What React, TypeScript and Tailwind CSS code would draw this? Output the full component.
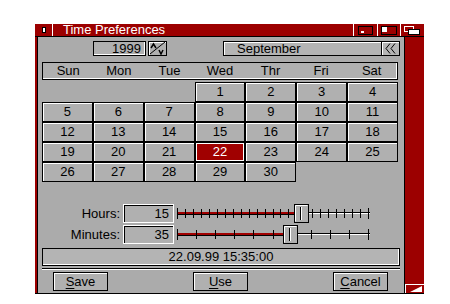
import React from 'react';

const days = ['Sun', 'Mon', 'Tue', 'Wed', 'Thr', 'Fri', 'Sat'];
const cells: (number | null)[] = [null, null, null, ...Array.from({ length: 30 }, (_, i) => i + 1)];

const Slider: React.FC<{ value: number; max: number; steps: number }> = ({ value, max, steps }) => {
  const w = 193;
  const kx = Math.round((value / max) * (w - 14));
  const ticks = Array.from({ length: steps + 1 }, (_, i) => Math.round((i * (w - 2)) / steps) + 1);
  return (
    <svg width={w} height={19} className="block">
      <rect x={0} y={8} width={kx} height={2} fill="#a00000" />
      <rect x={0} y={10} width={kx} height={1} fill="#000" />
      <rect x={kx + 14} y={8} width={w - kx - 14} height={1} fill="#000" />
      <rect x={kx + 14} y={9} width={w - kx - 14} height={1} fill="#fff" />
      {ticks.map((t, i) => (
        <rect key={i} x={t - 1} y={i === 0 || i === steps ? 4 : 5} width={1} height={i === 0 || i === steps ? 11 : 9} fill="#000" />
      ))}
      <rect x={kx + 0.5} y={0.5} width={14} height={18} fill="#b0b0b0" stroke="#000" />
      <path d={`M${kx + 1.5} 17.5V1.5H${kx + 13.5}`} stroke="#fff" fill="none" />
      <rect x={kx + 6} y={3} width={1} height={13} fill="#000" />
      <rect x={kx + 7} y={3} width={1} height={13} fill="#fff" />
    </svg>
  );
};

const Btn: React.FC<{ first: string; rest: string; className?: string }> = ({ first, rest, className }) => (
  <button className={`h-[19px] border border-black bg-[#b0b0b0] shadow-[inset_1px_1px_0_#fff] text-[13px] leading-none text-black ${className ?? ''}`}>
    <span className="underline underline-offset-2">{first}</span>
    {rest}
  </button>
);

export default function App() {
  return (
    <div className="w-[450px] h-[304px] bg-white pl-[35px] pt-[24px] font-['Liberation_Sans',Arial,sans-serif]">
      <div className="w-[389px] h-[270px] flex flex-col border-b border-black">
        {/* title bar */}
        <div className="h-[13px] bg-[#9c0000] flex items-stretch border-b border-black">
          <div className="w-[18px] border-r border-white flex items-center justify-center">
            <div className="w-[4px] h-[6px] bg-white border border-black" />
          </div>
          <div className="flex-1 pl-[10px] text-white text-[13px] leading-[12px]">Time Preferences</div>
          <div className="w-[24px] border-l border-white flex items-center justify-center">
            <div className="w-[15px] h-[9px] border border-black relative">
              <div className="absolute left-[2px] bottom-[1px] w-[3px] h-[2px] bg-white" />
            </div>
          </div>
          <div className="w-[23px] border-l border-white flex items-center justify-center">
            <div className="w-[16px] h-[9px] border border-black relative">
              <div className="absolute left-0 top-0 w-[5px] h-[5px] bg-white" />
            </div>
          </div>
          <div className="w-[24px] border-l border-white relative">
            <div className="absolute left-[3px] top-[2px] w-[10px] h-[6px] border border-white" />
            <div className="absolute left-[7px] top-[5px] w-[12px] h-[6px] bg-white border border-black" />
          </div>
        </div>

        <div className="flex-1 flex">
          <div className="w-[3px] bg-[#9c0000] border-r border-black" />
          {/* content */}
          <div className="w-[366px] bg-[#ababab] pt-[4px] pl-[4px] text-black text-[13px]">
            <div className="flex h-[15px]">
              <div className="ml-[51px] w-[53px] border border-black shadow-[inset_-1px_-1px_0_#fff] bg-[#b0b0b0] text-right pr-[4px] leading-[13px]">1999</div>
              <div className="ml-[2px] w-[19px] border border-black shadow-[inset_1px_1px_0_#fff] bg-[#b0b0b0]">
                <svg width={17} height={13} className="block">
                  <path d="M1 12L16 0" stroke="#000" />
                  <path d="M2 6L4.5 2L7 6" stroke="#000" fill="none" strokeWidth={1.5} />
                  <path d="M10 8L12 12L14 8" stroke="#000" fill="none" strokeWidth={1.5} />
                </svg>
              </div>
              <div className="ml-[56px] w-[159px] border border-black shadow-[inset_1px_1px_0_#fff] bg-[#b4b4b4] pl-[13px] leading-[13px]">September</div>
              <div className="w-[18px] border border-black border-l-0 shadow-[inset_1px_1px_0_#fff] bg-[#b4b4b4] flex items-center justify-center">
                <svg width={12} height={11} className="block">
                  <path d="M5 0.5L1 5.5L5 10.5M10 0.5L6 5.5L10 10.5" stroke="#000" fill="none" />
                </svg>
              </div>
            </div>

            <div className="mt-[6px] w-[356px] h-[18px] border border-black shadow-[inset_-1px_-1px_0_#fff] bg-[#b0b0b0] grid grid-cols-7">
              {days.map(d => (
                <div key={d} className="text-center leading-[16px]">{d}</div>
              ))}
            </div>

            <div className="mt-[2px] w-[356px] grid grid-cols-7 auto-rows-[20px]">
              {Array.from({ length: 35 }, (_, i) => cells[i] ?? null).map((n, i) =>
                n === null ? (
                  <div key={i} />
                ) : n === 22 ? (
                  <div key={i} className="border border-black bg-[#a00000] shadow-[inset_1px_1px_0_#fff,inset_-1px_-1px_0_#fff] text-white text-center leading-[18px]">{n}</div>
                ) : (
                  <div key={i} className="border border-black bg-[#b0b0b0] shadow-[inset_1px_1px_0_#fff] text-center leading-[18px]">{n}</div>
                )
              )}
            </div>

            <div className="mt-[22px] flex flex-col gap-[2px]">
              {[
                { label: 'Hours:', value: 15, max: 23, steps: 24 },
                { label: 'Minutes:', value: 35, max: 59, steps: 10 },
              ].map(r => (
                <div key={r.label} className="flex items-center h-[19px]">
                  <div className="w-[78px] text-right">{r.label}</div>
                  <div className="ml-[3px] w-[51px] h-[19px] border border-white shadow-[inset_1px_1px_0_#000] bg-[#b0b0b0] text-right pr-[4px] leading-[17px]">{r.value}</div>
                  <div className="ml-[3px]">
                    <Slider value={r.value} max={r.max} steps={r.steps} />
                  </div>
                </div>
              ))}
            </div>

            <div className="mt-[4px] w-[358px] h-[18px] border border-black shadow-[inset_-1px_-1px_0_#fff] bg-[#b4b4b4] text-center leading-[16px]">
              22.09.99 15:35:00
            </div>
            <div className="mt-[2px] w-[358px] border-t border-black border-b border-b-white" />

            <div className="mt-[2px] flex">
              <Btn first="S" rest="ave" className="ml-[11px] w-[55px]" />
              <Btn first="U" rest="se" className="ml-[85px] w-[55px]" />
              <Btn first="C" rest="ancel" className="ml-[85px] w-[55px]" />
            </div>
          </div>
          <div className="flex-1 bg-[#9c0000] border-l border-black flex flex-col justify-end">
            <div className="h-[9px] border-t border-l border-white relative">
              <svg width={18} height={8} className="absolute right-0 bottom-0">
                <path d="M4 7H16V1Z" fill="#fff" />
              </svg>
            </div>
          </div>
        </div>
      </div>
    </div>
  );
}
